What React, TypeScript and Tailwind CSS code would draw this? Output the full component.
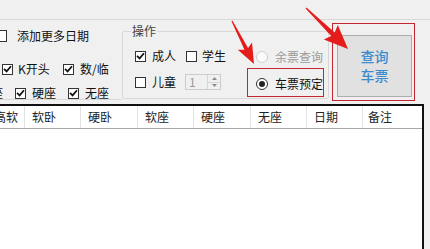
import React from "react";

// small win-forms style controls
function Box({ checked }: { checked?: boolean }) {
  return (
    <span className="flex h-[11px] w-[11px] shrink-0 items-center justify-center border border-[#333] bg-white">
      {checked && (
        <svg width="9" height="8" viewBox="0 0 9 8">
          <path d="M1 3.8 L3.6 6.4 L8 1.2" fill="none" stroke="#111" strokeWidth="1.7" />
        </svg>
      )}
    </span>
  );
}

function Radio({ checked, disabled }: { checked?: boolean; disabled?: boolean }) {
  return (
    <span
      className={
        disabled
          ? "flex h-[12px] w-[12px] shrink-0 items-center justify-center rounded-full border border-[#cfcfcf] bg-[#fafafa]"
          : "flex h-[12px] w-[12px] shrink-0 items-center justify-center rounded-full border border-[#333] bg-white"
      }
    >
      {checked && <span className="h-[6px] w-[6px] rounded-full bg-[#222]" />}
    </span>
  );
}

function Arrow({ tail, tip, len, half, shaft }: { tail: number[]; tip: number[]; len: number; half: number; shaft: number }) {
  const dx = tip[0] - tail[0];
  const dy = tip[1] - tail[1];
  const d = Math.hypot(dx, dy);
  const ux = dx / d;
  const uy = dy / d;
  const nx = -uy;
  const ny = ux;
  const bx = tip[0] - ux * len;
  const by = tip[1] - uy * len;
  const pts = [
    [tail[0] + nx * 0.6, tail[1] + ny * 0.6],
    [bx + ux * 3 + nx * shaft, by + uy * 3 + ny * shaft],
    [bx + nx * half, by + ny * half],
    [tip[0], tip[1]],
    [bx - nx * half, by - ny * half],
    [bx + ux * 3 - nx * shaft, by + uy * 3 - ny * shaft],
    [tail[0] - nx * 0.6, tail[1] - ny * 0.6],
  ];
  return <polygon points={pts.map((p) => p.join(",")).join(" ")} fill="#e51c1c" />;
}

const cols = [
  { t: "软卧", w: "w-[56px]" },
  { t: "硬卧", w: "w-[57px]" },
  { t: "软座", w: "w-[56px]" },
  { t: "硬座", w: "w-[57px]" },
  { t: "无座", w: "w-[56px]" },
  { t: "日期", w: "w-[56px]" },
];

export default function App() {
  return (
    <div className="relative h-[249px] w-[430px] overflow-hidden bg-[#f0f0f0] font-['Noto_Sans_CJK_SC',sans-serif] text-[12px] leading-[14px] text-[#111]">
      <div className="h-[19px]" />
      <div className="border-t border-[#d8d8d8]" />

      <div className="flex h-[84px]">
        {/* left options */}
        <div className="flex h-[80px] w-[122px] shrink-0 flex-col border-b border-[#d8d8d8]">
          <div className="ml-[-5px] mt-[9px] flex h-[14px] items-center">
            <span className="h-[12px] w-[12px] shrink-0 border border-[#333] bg-white" />
            <span className="ml-[10px] whitespace-nowrap">添加更多日期</span>
          </div>
          <div className="ml-[2px] mt-[19px] flex h-[14px] items-center">
            <Box checked />
            <span className="ml-[5px] w-[45px] whitespace-nowrap">K开头</span>
            <Box checked />
            <span className="ml-[6px] whitespace-nowrap">数/临</span>
          </div>
          <div className="ml-[-9px] mt-[10px] flex h-[14px] items-center">
            <span className="w-[24px] whitespace-nowrap">座</span>
            <Box checked />
            <span className="ml-[6px] w-[36px] whitespace-nowrap">硬座</span>
            <Box checked />
            <span className="ml-[6px] whitespace-nowrap">无座</span>
          </div>
        </div>

        {/* 操作 */}
        <fieldset className="mt-[4px] h-[75px] w-[207px] shrink-0 rounded-[2px] border border-[#d8d8d8]">
          <legend className="ml-[8px] px-[1px] leading-[14px] text-[#444]">操作</legend>
          <div className="flex">
            <div className="w-[124px] shrink-0 pl-[12px]">
              <div className="mt-[11px] flex h-[14px] items-center">
                <Box checked />
                <span className="ml-[6px] w-[34px] whitespace-nowrap">成人</span>
                <Box />
                <span className="ml-[5px] whitespace-nowrap">学生</span>
              </div>
              <div className="mt-[11px] flex h-[16px] items-center">
                <Box />
                <span className="ml-[6px] w-[33px] whitespace-nowrap">儿童</span>
                <div className="flex h-[16px] w-[36px] border border-[#cccccc] bg-[#f0f0f0]">
                  <span className="flex-1 pl-[3px] leading-[14px] text-[#9a9a9a]">1</span>
                  <div className="flex w-[13px] flex-col border-l border-[#d6d6d6]">
                    <span className="flex flex-1 items-center justify-center border-b border-[#d6d6d6]">
                      <svg width="5" height="3" viewBox="0 0 5 3"><path d="M0 3 L2.5 0 L5 3Z" fill="#8a8a8a" /></svg>
                    </span>
                    <span className="flex flex-1 items-center justify-center">
                      <svg width="5" height="3" viewBox="0 0 5 3"><path d="M0 0 L2.5 3 L5 0Z" fill="#8a8a8a" /></svg>
                    </span>
                  </div>
                </div>
              </div>
            </div>
            <div className="w-[77px] shrink-0">
              <div className="mt-[12px] flex h-[14px] items-center pl-[9px]">
                <Radio disabled />
                <span className="ml-[7px] whitespace-nowrap text-[#9a9a9a]">余票查询</span>
              </div>
              <div className="mt-[4px] flex h-[29px] items-center border border-[#c1272d] pl-[8px] pt-[2px]">
                <Radio checked />
                <span className="ml-[7px] whitespace-nowrap">车票预定</span>
              </div>
            </div>
          </div>
        </fieldset>

        {/* query button */}
        <div className="ml-[3px] mt-[3px] h-[78px] w-[83px] shrink-0 border border-[#c1272d] pl-[4px] pt-[11px]">
          <button className="flex h-[62px] w-[75px] flex-col items-center justify-center border border-[#adadad] bg-[#e1e1e1] text-[14px] font-medium leading-[19px] text-[#3d8bcc]">
            <span>查询</span>
            <span>车票</span>
          </button>
        </div>
      </div>

      {/* result table */}
      <div className="h-[145px] w-[424px] border-r-2 border-t-2 border-[#111] bg-white">
        <div className="flex h-[23px] border-b border-[#a8a8a8] text-[#222]">
          <div className="flex w-[25px] shrink-0 items-center overflow-hidden border-r border-[#e2e2e2]">
            <span className="ml-[-6px] whitespace-nowrap">高软</span>
          </div>
          {cols.map((c) => (
            <div key={c.t} className={`flex ${c.w} shrink-0 items-center border-r border-[#e2e2e2] pl-[7px]`}>
              {c.t}
            </div>
          ))}
          <div className="flex flex-1 items-center pl-[5px]">备注</div>
        </div>
      </div>

      <svg className="pointer-events-none absolute left-0 top-0" width="430" height="249">
        <Arrow tail={[232, 21]} tip={[254, 64]} len={20} half={8} shaft={2} />
        <Arrow tail={[306, 8]} tip={[348, 49]} len={24} half={10} shaft={2.5} />
      </svg>
    </div>
  );
}
